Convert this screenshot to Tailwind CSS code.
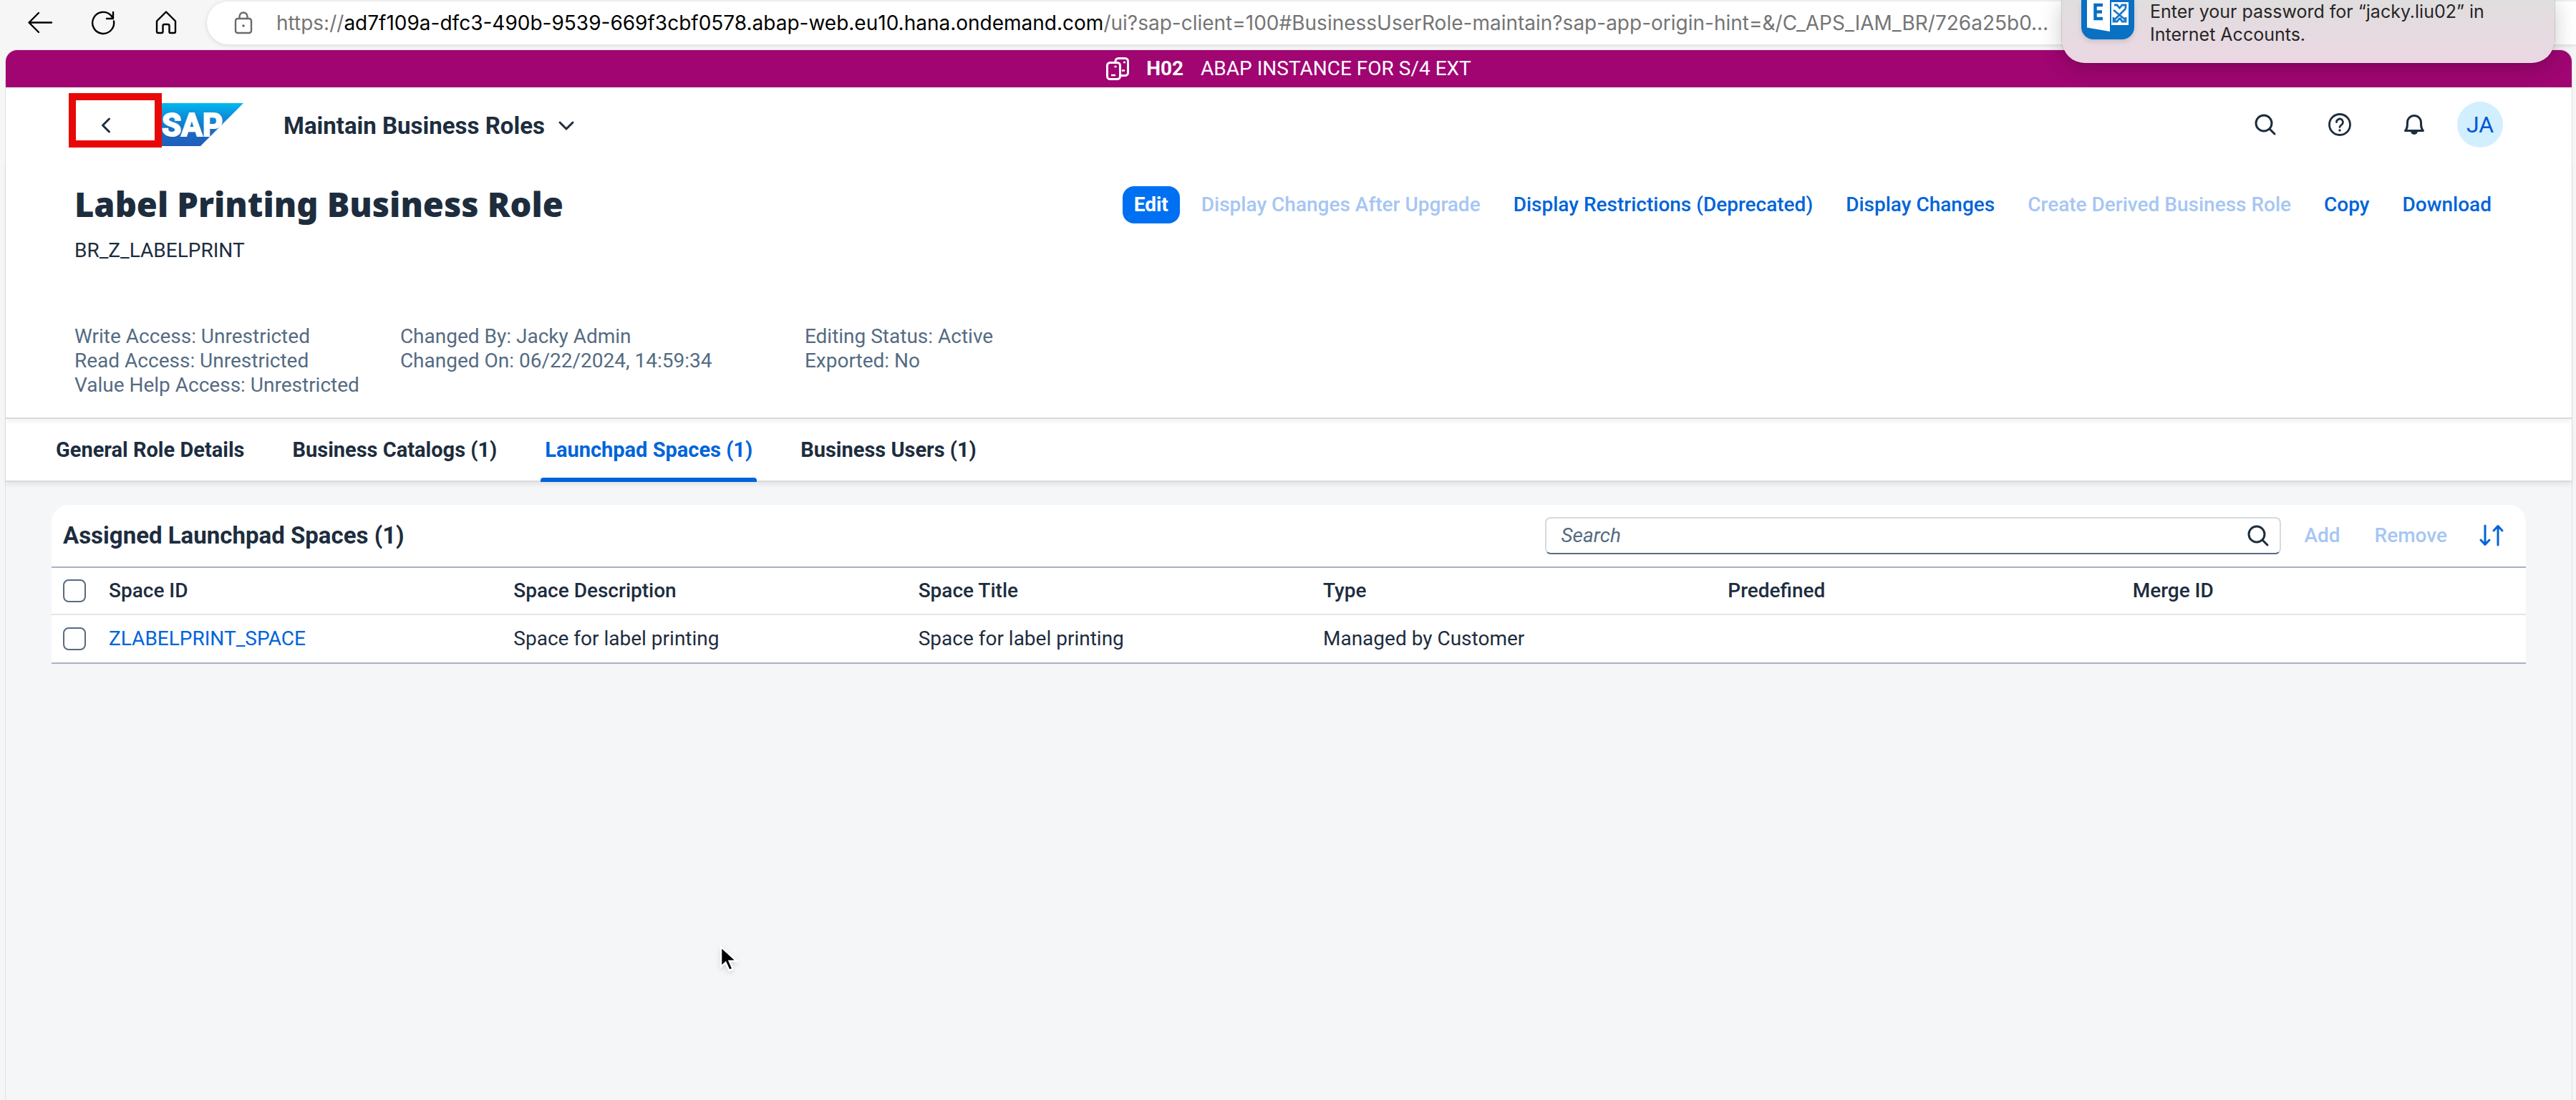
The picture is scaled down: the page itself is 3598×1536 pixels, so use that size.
<!DOCTYPE html>
<html lang="en">
<head>
<meta charset="utf-8">
<title>Maintain Business Roles</title>
<script src="https://cdn.jsdelivr.net/npm/@tailwindcss/browser@4"></script>
</head>
<body class="flex min-h-screen flex-col overflow-x-hidden bg-[#f6f6f6] font-[Roboto,sans-serif] text-[28px] leading-[34px] text-[#1d2d3e]">

<!-- Browser toolbar -->
<div class="flex h-[70px] items-start pt-[2px] text-black">
  <div class="flex h-[60px] w-[289px] shrink-0 items-center pl-9">
    <button aria-label="Back" class="w-[88px]"><svg class="size-10" viewBox="0 0 40 40" fill="none" stroke="currentColor" stroke-width="2.4" stroke-linecap="round" stroke-linejoin="round"><path d="M36 19.500H4.500M18 6 4.500 19.500 18 33"/></svg></button>
    <button aria-label="Reload" class="w-[88px]"><svg class="size-10" viewBox="0 0 40 40" fill="none" stroke="currentColor" stroke-width="2.4" stroke-linecap="round" stroke-linejoin="round"><path d="M35 17.500A15 15 0 1 1 31 9.500L33.500 13M34 5v9h-9"/></svg></button>
    <button aria-label="Home"><svg class="size-10" viewBox="0 0 40 40" fill="none" stroke="currentColor" stroke-width="2.4" stroke-linejoin="round"><path d="M7 17.500 20 4.500 33 17.500V32a2 2 0 0 1-2 2h-5a1.500 1.500 0 0 1-1.500-1.500V24a2 2 0 0 0-2-2h-5a2 2 0 0 0-2 2v8.500A1.500 1.500 0 0 1 14 34H9a2 2 0 0 1-2-2Z"/></svg></button>
  </div>
  <div class="flex h-[60px] grow items-center rounded-l-[30px] bg-white pl-[35px] shadow-[0_1px_6px_rgba(0,0,0,0.13)]">
    <svg class="h-8 w-8 shrink-0 text-[#6b6b6b]" viewBox="0 0 32 32" fill="none" stroke="currentColor" stroke-width="2.4"><rect x="5" y="10" width="22" height="20" rx="3"/><path d="M10.500 10V7a5.500 5.500 0 0 1 11 0v3"/><circle cx="16" cy="20" r="1.300" fill="currentColor" stroke-width="1"/></svg>
    <div class="ml-[30px] font-[Inter,sans-serif] whitespace-nowrap text-[#757575]">https://<span class="text-black">ad7f109a-dfc3-490b-9539-669f3cbf0578.abap-web.eu10.hana.ondemand.com</span>/ui?sap-client=100#BusinessUserRole-maintain?sap-app-origin-hint=&amp;/C_APS_IAM_BR/726a25b0…</div>
  </div>
</div>

<!-- System notification, slides in over the window -->
<aside class="absolute top-0 right-[30px] flex h-[88px] w-[688px] rounded-b-[32px] bg-linear-to-b from-[#e0dede] to-[#ebd7e3] pl-[27px] font-[Inter,sans-serif] text-[25px] leading-8 text-[#262626] shadow-[0_0_1px_1px_rgba(0,0,0,0.15),0_6px_30px_rgba(0,0,0,0.22)]">
  <svg class="h-[64px] w-[74px] shrink-0 drop-shadow-md" viewBox="0 0 74 64"><path d="M0 0h74v38a17 17 0 0 1-17 17H17A17 17 0 0 1 0 38Z" fill="#0a70c4"/><path d="M42 3h24v32H42Z" fill="#fff"/><path d="M8 0h32v44L8 38.500Z" fill="#fff"/><path d="M30 7H19.500v19H30M20 16.500h9" fill="none" stroke="#0a70c4" stroke-width="4.500"/><path d="M45 14l17 14M62 12 46 28M46 7h4l4 5M62 12V7h-5l-4 5M62 24v6h-5l-3-5M45 24v6h5l4-5" fill="none" stroke="#1a78c8" stroke-width="2.800"/></svg>
  <p class="ml-[22px] whitespace-nowrap">Enter your password for “jacky.liu02” in<br>Internet Accounts.</p>
</aside>

<div class="mr-[6px] ml-2 flex grow flex-col rounded-t-[16px] bg-[#f5f6f8] shadow-[0_0_0_1px_#e2e2e2]">
  <!-- System banner -->
  <div class="flex h-[52px] items-center justify-center rounded-t-[16px] bg-[#a00572] text-white">
    <svg class="size-8" viewBox="0 0 32 32" fill="none" stroke="currentColor" stroke-width="3" stroke-linejoin="round"><rect x="1.500" y="7.500" width="18" height="23" rx="4"/><path d="M13 6.500V5.500a4 4 0 0 1 4-4h9.500a4 4 0 0 1 4 4v16a4 4 0 0 1-4 4H20"/><path d="M7 25h6M22 18.500h4M11.500 13h3M24 7h3" stroke-width="2.600"/></svg>
    <b class="ml-6">H02</b>
    <span class="ml-6">ABAP INSTANCE FOR S/4 EXT</span>
  </div>

  <!-- Shell header -->
  <header class="flex h-[104px] items-center bg-white pr-24 pl-[88px]">
    <div class="mb-3 flex h-[76px] w-[130px] shrink-0 items-center border-[10px] border-[#e90808] pl-7">
      <button aria-label="Back" class="mt-[14px]"><svg class="size-7" viewBox="0 0 28 28" fill="none" stroke="currentColor" stroke-width="3" stroke-linecap="round" stroke-linejoin="round"><path d="M18.500 5 9.500 14l9 9"/></svg></button>
    </div>
    <a href="#" aria-label="SAP home" class="shrink-0"><svg class="h-[60px] w-[114px]" viewBox="6 0 114 60"><defs><linearGradient id="g" x1="0" y1="0" x2="0" y2="1"><stop offset="0" stop-color="#00b8f1"/><stop offset=".3" stop-color="#0d90d9"/><stop offset=".7" stop-color="#1b68c3"/><stop offset="1" stop-color="#1f5fbb"/></linearGradient></defs><path d="M0 0h120L60 60H0Z" fill="url(#g)"/><text x="6" y="46" class="fill-white stroke-white font-[Roboto,sans-serif] text-[44px] font-bold" stroke-width="2">SAP</text></svg></a>
    <button class="mt-1 ml-14 flex items-center gap-[18px] text-[33px] leading-10 font-bold whitespace-nowrap">Maintain Business Roles
      <svg class="size-6" viewBox="0 0 24 24" fill="none" stroke="currentColor" stroke-width="3" stroke-linecap="round" stroke-linejoin="round"><path d="m3 7 9 9 9-9"/></svg>
    </button>
    <div class="ml-auto flex items-center gap-[72px]">
      <button aria-label="Search"><svg class="size-8" viewBox="0 0 32 32" fill="none" stroke="currentColor" stroke-width="3" stroke-linecap="round"><circle cx="14" cy="14" r="11"/><path d="m22 22 7 7"/></svg></button>
      <button aria-label="Help"><svg class="size-8" viewBox="0 0 32 32" fill="none" stroke="currentColor" stroke-width="2.800" stroke-linecap="round"><circle cx="16" cy="16" r="14.500"/><path d="M11.500 12.500a4.500 4.500 0 1 1 7 3.800c-1.700 1.100-2.500 1.700-2.500 3.200"/><circle cx="16" cy="24" r="1" fill="currentColor" stroke-width="1.500"/></svg></button>
      <div class="flex items-center gap-[44px]">
        <button aria-label="Notifications"><svg class="size-8" viewBox="0 0 32 32" fill="none" stroke="currentColor" stroke-width="3" stroke-linejoin="round"><path d="M3.500 24.500C6.500 21.500 6.500 18 6.500 13a9.500 9.500 0 0 1 19 0c0 5 0 8.500 3 11.500Z"/><path d="M11 25h10a5 5 0 0 1-10 0Z" fill="currentColor" stroke="none"/></svg></button>
        <button class="size-16 rounded-full bg-[#d1efff] text-[32px] text-[#0057d2]">JA</button>
      </div>
    </div>
  </header>

  <!-- Object page header -->
  <section class="relative border-b-2 border-[#d9d9d9] bg-white px-24 pb-7 shadow-[0_4px_6px_rgba(0,0,0,0.05)]">
    <div class="flex items-start justify-between pt-[34px]">
      <h1 class="font-[Noto_Sans,sans-serif] text-[47px] leading-[50px] font-black whitespace-nowrap">Label Printing Business Role</h1>
      <div class="flex items-center gap-[14px] whitespace-nowrap font-medium text-[#0064d9] *:h-[52px] *:rounded-2xl *:px-4">
        <button class="bg-[#0070f2] font-bold text-white">Edit</button>
        <button disabled class="text-[#a6c6f3]">Display Changes After Upgrade</button>
        <button>Display Restrictions (Deprecated)</button>
        <button>Display Changes</button>
        <button disabled class="text-[#a6c6f3]">Create Derived Business Role</button>
        <button>Copy</button>
        <button>Download</button>
      </div>
    </div>
    <p class="mt-[21px]">BR_Z_LABELPRINT</p>
    <div class="mt-[86px] flex gap-[57px] text-[#556b82]">
      <div><p>Write Access: Unrestricted</p><p>Read Access: Unrestricted</p><p>Value Help Access: Unrestricted</p></div>
      <div class="w-[508px]"><p>Changed By: Jacky Admin</p><p>Changed On: 06/22/2024, 14:59:34</p></div>
      <div><p>Editing Status: Active</p><p>Exported: No</p></div>
    </div>
  </section>

  <!-- Tabs -->
  <nav class="flex h-[88px] gap-[55px] border-b-2 border-[#d9d9d9] bg-white px-16 text-[29px] font-bold shadow-[0_4px_6px_rgba(0,0,0,0.07)]">
    <a href="#" class="flex items-center px-[6px]">General Role Details</a>
    <a href="#" class="flex items-center px-[6px]">Business Catalogs (1)</a>
    <a href="#" aria-current="page" class="relative flex items-center px-[6px] text-[#0064d9]">Launchpad Spaces (1)<span class="absolute inset-x-0 -bottom-[2px] h-[6px] rounded-t bg-[#0064d9]"></span></a>
    <a href="#" class="flex items-center px-[6px]">Business Users (1)</a>
  </nav>

  <!-- Assigned spaces -->
  <main class="mx-16 mt-8 rounded-t-[24px] bg-white">
    <div class="flex h-[86px] items-center pr-[30px] pl-4">
      <h2 class="text-[33px] leading-10 font-bold">Assigned Launchpad Spaces (1)</h2>
      <div class="ml-auto flex h-[52px] w-[1028px] items-center rounded-lg border-2 border-[#d5dae0] border-b-[#556b82] pr-[14px] pl-5">
        <input type="search" aria-label="Search spaces" placeholder="Search" class="grow outline-none placeholder:text-[#556b82] placeholder:italic">
        <svg class="size-8" viewBox="0 0 32 32" fill="none" stroke="currentColor" stroke-width="3" stroke-linecap="round"><circle cx="14" cy="14" r="11"/><path d="m22 22 7 7"/></svg>
      </div>
      <button disabled class="ml-8 font-medium text-[#a6c6f3]">Add</button>
      <button disabled class="ml-12 font-medium text-[#a6c6f3]">Remove</button>
      <button aria-label="Sort" class="ml-11 text-[#0064d9]"><svg class="size-9" viewBox="0 0 36 36" fill="none" stroke="currentColor" stroke-width="3" stroke-linecap="round" stroke-linejoin="round"><path d="M9 4v26M3 24l6 6.500 6-6.500M27 31V5M21 11l6-6.500 6 6.500"/></svg></button>
    </div>
    <table class="w-full table-fixed border-y-2 border-[#a8b2bd] text-left">
      <thead>
        <tr class="h-[66px] border-b-2 border-[#e5e5e5]">
          <th class="w-16 pl-4"><input type="checkbox" aria-label="Select all" class="block size-8 appearance-none rounded-lg border-2 border-[#556b82] bg-white"></th>
          <th class="pl-4 font-medium">Space ID</th><th class="pl-4 font-medium">Space Description</th><th class="pl-4 font-medium">Space Title</th><th class="pl-4 font-medium">Type</th><th class="pl-4 font-medium">Predefined</th><th class="pl-4 font-medium">Merge ID</th>
        </tr>
      </thead>
      <tbody>
        <tr class="h-[68px]">
          <td class="pl-4"><input type="checkbox" aria-label="Select ZLABELPRINT_SPACE" class="block size-8 appearance-none rounded-lg border-2 border-[#556b82] bg-white"></td>
          <td class="pl-4"><a href="#" class="text-[#0064d9]">ZLABELPRINT_SPACE</a></td><td class="pl-4">Space for label printing</td><td class="pl-4">Space for label printing</td><td class="pl-4">Managed by Customer</td><td></td><td></td>
        </tr>
      </tbody>
    </table>
  </main>
</div>

<!-- Mouse pointer -->
<svg aria-hidden="true" class="absolute top-[1320px] left-[1005px] h-10 w-7 drop-shadow-md" viewBox="0 0 28 40"><path d="M2 2v28l6.500-6 5 11 5-2.200-4.800-10.800H24Z" fill="#000" stroke="#fff" stroke-width="2.500"/></svg>
</body>
</html>
